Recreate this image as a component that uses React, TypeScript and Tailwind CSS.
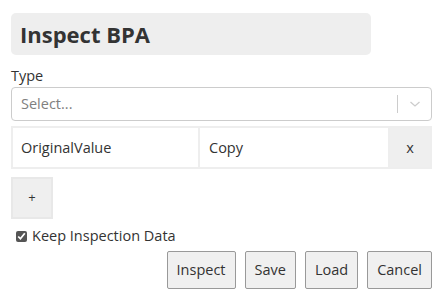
import React from "react";

export default function App() {
  return (
    <div className="w-[444px] h-[296px] bg-white text-[#333] overflow-hidden" style={{ fontFamily: '"Open Sans", sans-serif' }}>
      <div className="pl-[11px] pr-[12px] pt-[13px]">
        <div className="w-[360px] h-[42px] bg-[#eeeeee] rounded-[5px] flex items-center pl-[9px]">
          <h1 className="text-[22px] font-bold text-[#333] leading-none">Inspect BPA</h1>
        </div>
        <div className="mt-[11px] text-[14.5px] leading-[20px] text-[#333]">Type</div>
        <div className="mt-[1px] h-[34px] border border-[#cccccc] rounded-[4px] flex items-center">
          <div className="flex-1 pl-[9px] text-[14.5px] text-[#808080]">Select...</div>
          <div className="w-px h-[18px] bg-[#cccccc]" />
          <div className="w-[33px] flex items-center justify-center">
            <svg width="12" height="8" viewBox="0 0 12 8" fill="none">
              <path d="M1.5 2 L6 6 L10.5 2" stroke="#cccccc" strokeWidth="1.3" />
            </svg>
          </div>
        </div>
        <div className="mt-[5px] h-[43px] flex border-2 border-[#eeeeee]">
          <div className="w-[187px] flex items-center pl-[8px] text-[14.5px] border-r-2 border-[#eeeeee]">OriginalValue</div>
          <div className="w-[190px] flex items-center pl-[9px] text-[14.5px] border-r-2 border-[#eeeeee]">Copy</div>
          <div className="flex-1 flex items-center justify-center bg-[#efefef] text-[14.5px]">x</div>
        </div>
        <div className="mt-[8px] w-[42px] h-[42px] border-2 border-[#e8e8e8] bg-[#efefef] flex items-center justify-center text-[13px]">+</div>
        <label className="mt-[7px] ml-[5px] flex items-center gap-[5px] text-[14.5px] leading-[20px]">
          <input type="checkbox" defaultChecked className="w-[11px] h-[11px] m-0 accent-[#555]" />
          <span>Keep Inspection Data</span>
        </label>
        <div className="mt-[5px] flex justify-end gap-[9px]">
          {["Inspect", "Save", "Load", "Cancel"].map((b) => (
            <button key={b} className="h-[38px] px-[9px] border border-[#999] bg-[#f0f0f0] rounded-[2px] text-[14.5px] text-[#333]">
              {b}
            </button>
          ))}
        </div>
      </div>
    </div>
  );
}
